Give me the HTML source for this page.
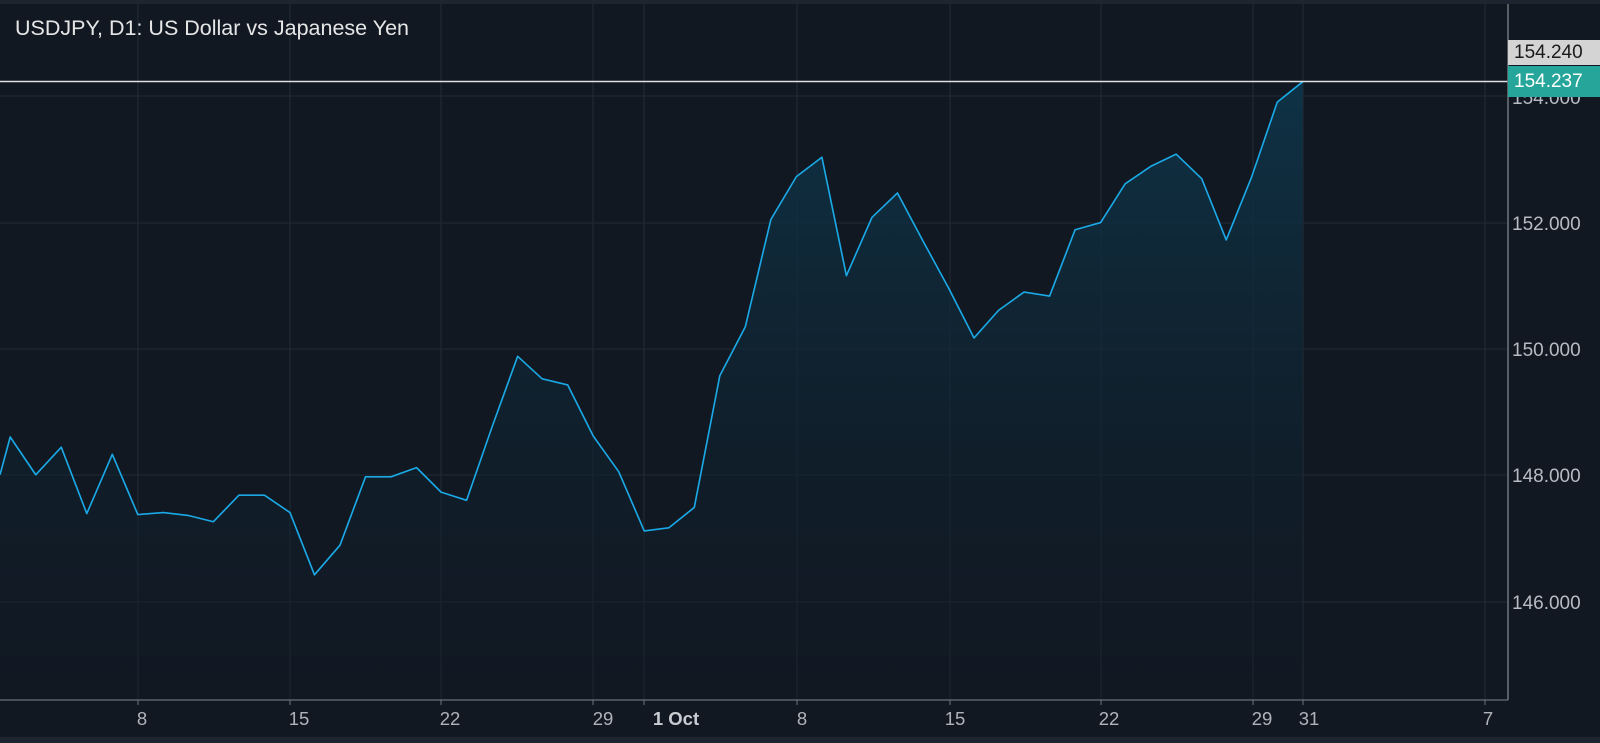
<!DOCTYPE html>
<html><head><meta charset="utf-8"><style>
html,body{margin:0;padding:0;background:#111822;}
body{width:1600px;height:743px;overflow:hidden;position:relative;font-family:"Liberation Sans","DejaVu Sans",sans-serif;}
.t{position:absolute;left:15px;top:16px;color:#e6e6e6;font-size:21.5px;}
.yl{position:absolute;left:1512px;color:#b8bcc2;font-size:19px;}
.xl{position:absolute;top:708px;color:#b0b4ba;font-size:18.5px;transform:translateX(-50%);}
.box{position:absolute;left:1508px;width:92px;font-size:19px;padding-left:6px;box-sizing:border-box;}
</style></head><body>
<svg width="1600" height="743" style="position:absolute;left:0;top:0">
<defs><linearGradient id="g" x1="0" y1="0" x2="0" y2="1">
<stop offset="0" stop-color="#0e3448" stop-opacity="0.95"/>
<stop offset="1" stop-color="#111822" stop-opacity="0.3"/></linearGradient></defs>
<rect x="0" y="0" width="1600" height="4" fill="#1e2530"/>
<rect x="0" y="737" width="1600" height="6" fill="#1e2530"/>
<g stroke="#1f2833" stroke-width="1.3">
<line x1="0" y1="96" x2="1508" y2="96"/><line x1="0" y1="223" x2="1508" y2="223"/>
<line x1="0" y1="349" x2="1508" y2="349"/><line x1="0" y1="475" x2="1508" y2="475"/>
<line x1="0" y1="602" x2="1508" y2="602"/>
<line x1="138" y1="4" x2="138" y2="700"/><line x1="290" y1="4" x2="290" y2="700"/>
<line x1="441" y1="4" x2="441" y2="700"/><line x1="593" y1="4" x2="593" y2="700"/>
<line x1="644" y1="4" x2="644" y2="700"/><line x1="797" y1="4" x2="797" y2="700"/>
<line x1="950" y1="4" x2="950" y2="700"/><line x1="1101" y1="4" x2="1101" y2="700"/>
<line x1="1253" y1="4" x2="1253" y2="700"/><line x1="1303" y1="4" x2="1303" y2="700"/>
<line x1="1485" y1="4" x2="1485" y2="700"/>
</g>
<g transform="scale(1.021)">
<polygon fill="url(#g)" points="0,465 10,428 35,465 60,438 85,503 110,445 135,504 160,502 185,505 209,511 234,485 259,485 284,502 308,563 333,534 358,467 383,467 408,458 432,482 457,490 482,418 507,349 531,371 556,377 581,427 606,462 631,520 655,517 680,497 705,368 730,320 755,215 780,173 805,154 829,270 854,213 879,189 904,236 929,282 954,331 978,304 1003,286 1028,290 1053,225 1078,218 1102,180 1127,163 1152,151 1177,175 1201,235 1226,173 1251,100 1276,80 1276,685 0,685"/>
<polyline fill="none" stroke="#1aa9e6" stroke-width="1.6" stroke-linejoin="round" points="0,465 10,428 35,465 60,438 85,503 110,445 135,504 160,502 185,505 209,511 234,485 259,485 284,502 308,563 333,534 358,467 383,467 408,458 432,482 457,490 482,418 507,349 531,371 556,377 581,427 606,462 631,520 655,517 680,497 705,368 730,320 755,215 780,173 805,154 829,270 854,213 879,189 904,236 929,282 954,331 978,304 1003,286 1028,290 1053,225 1078,218 1102,180 1127,163 1152,151 1177,175 1201,235 1226,173 1251,100 1276,80"/>
</g>
<line x1="0" y1="81.5" x2="1508" y2="81.5" stroke="#e0e0e0" stroke-width="1.6"/>
<line x1="0" y1="700" x2="1508" y2="700" stroke="#5a616b" stroke-width="1.5"/>
<line x1="1508" y1="4" x2="1508" y2="700" stroke="#6f757d" stroke-width="1.5"/>
<g stroke="#6f757d" stroke-width="1">
<line x1="138" y1="700" x2="138" y2="705"/><line x1="290" y1="700" x2="290" y2="705"/>
<line x1="441" y1="700" x2="441" y2="705"/><line x1="593" y1="700" x2="593" y2="705"/>
<line x1="644" y1="700" x2="644" y2="705"/><line x1="797" y1="700" x2="797" y2="705"/>
<line x1="950" y1="700" x2="950" y2="705"/><line x1="1101" y1="700" x2="1101" y2="705"/>
<line x1="1253" y1="700" x2="1253" y2="705"/><line x1="1303" y1="700" x2="1303" y2="705"/>
<line x1="1485" y1="700" x2="1485" y2="705"/>
</g>
</svg>
<div class="t">USDJPY, D1: US Dollar vs Japanese Yen</div>
<div class="yl" style="top:88px">154.000</div>
<div class="yl" style="top:214px">152.000</div>
<div class="yl" style="top:340px">150.000</div>
<div class="yl" style="top:466px">148.000</div>
<div class="yl" style="top:593px">146.000</div>
<div class="box" style="top:40px;height:25px;line-height:25px;background:#d4d4d4;color:#1a1a1a">154.240</div>
<div class="box" style="top:66px;height:31px;line-height:31px;background:#26a69a;color:#fff">154.237</div>
<div class="xl" style="left:142px">8</div>
<div class="xl" style="left:299px">15</div>
<div class="xl" style="left:450px">22</div>
<div class="xl" style="left:603px">29</div>
<div class="xl" style="left:676px;color:#c8ccd2;font-weight:bold">1 Oct</div>
<div class="xl" style="left:802px">8</div>
<div class="xl" style="left:955px">15</div>
<div class="xl" style="left:1109px">22</div>
<div class="xl" style="left:1262px">29</div>
<div class="xl" style="left:1309px">31</div>
<div class="xl" style="left:1488px">7</div>
</body></html>
